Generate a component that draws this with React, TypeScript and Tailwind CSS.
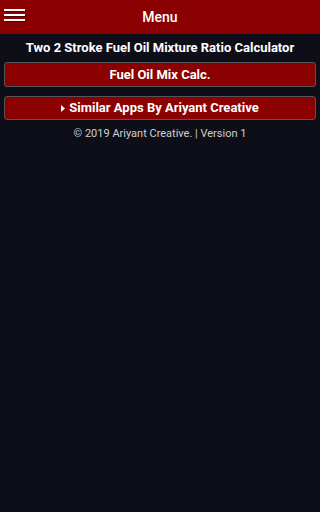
export default function App() {
  return (
    <div
      className="min-h-[512px] w-full bg-[#0e0e19] text-white"
      style={{ fontFamily: "Roboto, 'Liberation Sans', sans-serif" }}
    >
      <header className="relative flex h-[34px] items-center justify-center bg-[#8b0000]">
        <button className="absolute left-[4px] top-[9px] flex w-[21px] flex-col gap-[3px]">
          <span className="block h-[2px] w-full bg-white shadow-[1px_1px_0_rgba(0,0,0,0.4)]" />
          <span className="block h-[2px] w-full bg-white shadow-[1px_1px_0_rgba(0,0,0,0.4)]" />
          <span className="block h-[2px] w-full bg-white shadow-[1px_1px_0_rgba(0,0,0,0.4)]" />
        </button>
        <span className="text-[14px] font-medium">Menu</span>
      </header>
      <h1 className="pt-[4px] text-center text-[13px] font-bold leading-[20px]">
        Two 2 Stroke Fuel Oil Mixture Ratio Calculator
      </h1>
      <div className="flex flex-col gap-[9px] px-[4px] pt-[4px]">
        <button className="h-[25px] rounded-[3px] border border-[#555] bg-[#8b0000] text-[13px] font-bold">
          Fuel Oil Mix Calc.
        </button>
        <button className="flex h-[24px] items-center justify-center gap-[4px] rounded-[3px] border border-[#555] bg-[#8b0000] text-[13px] font-bold">
          <svg width="4" height="7" viewBox="0 0 4 7" className="fill-white">
            <path d="M0 0L4 3.5L0 7Z" />
          </svg>
          Similar Apps By Ariyant Creative
        </button>
      </div>
      <p className="pt-[6px] text-center text-[11px] text-[#cfcfcf]">
        © 2019 Ariyant Creative. | Version 1
      </p>
    </div>
  );
}
